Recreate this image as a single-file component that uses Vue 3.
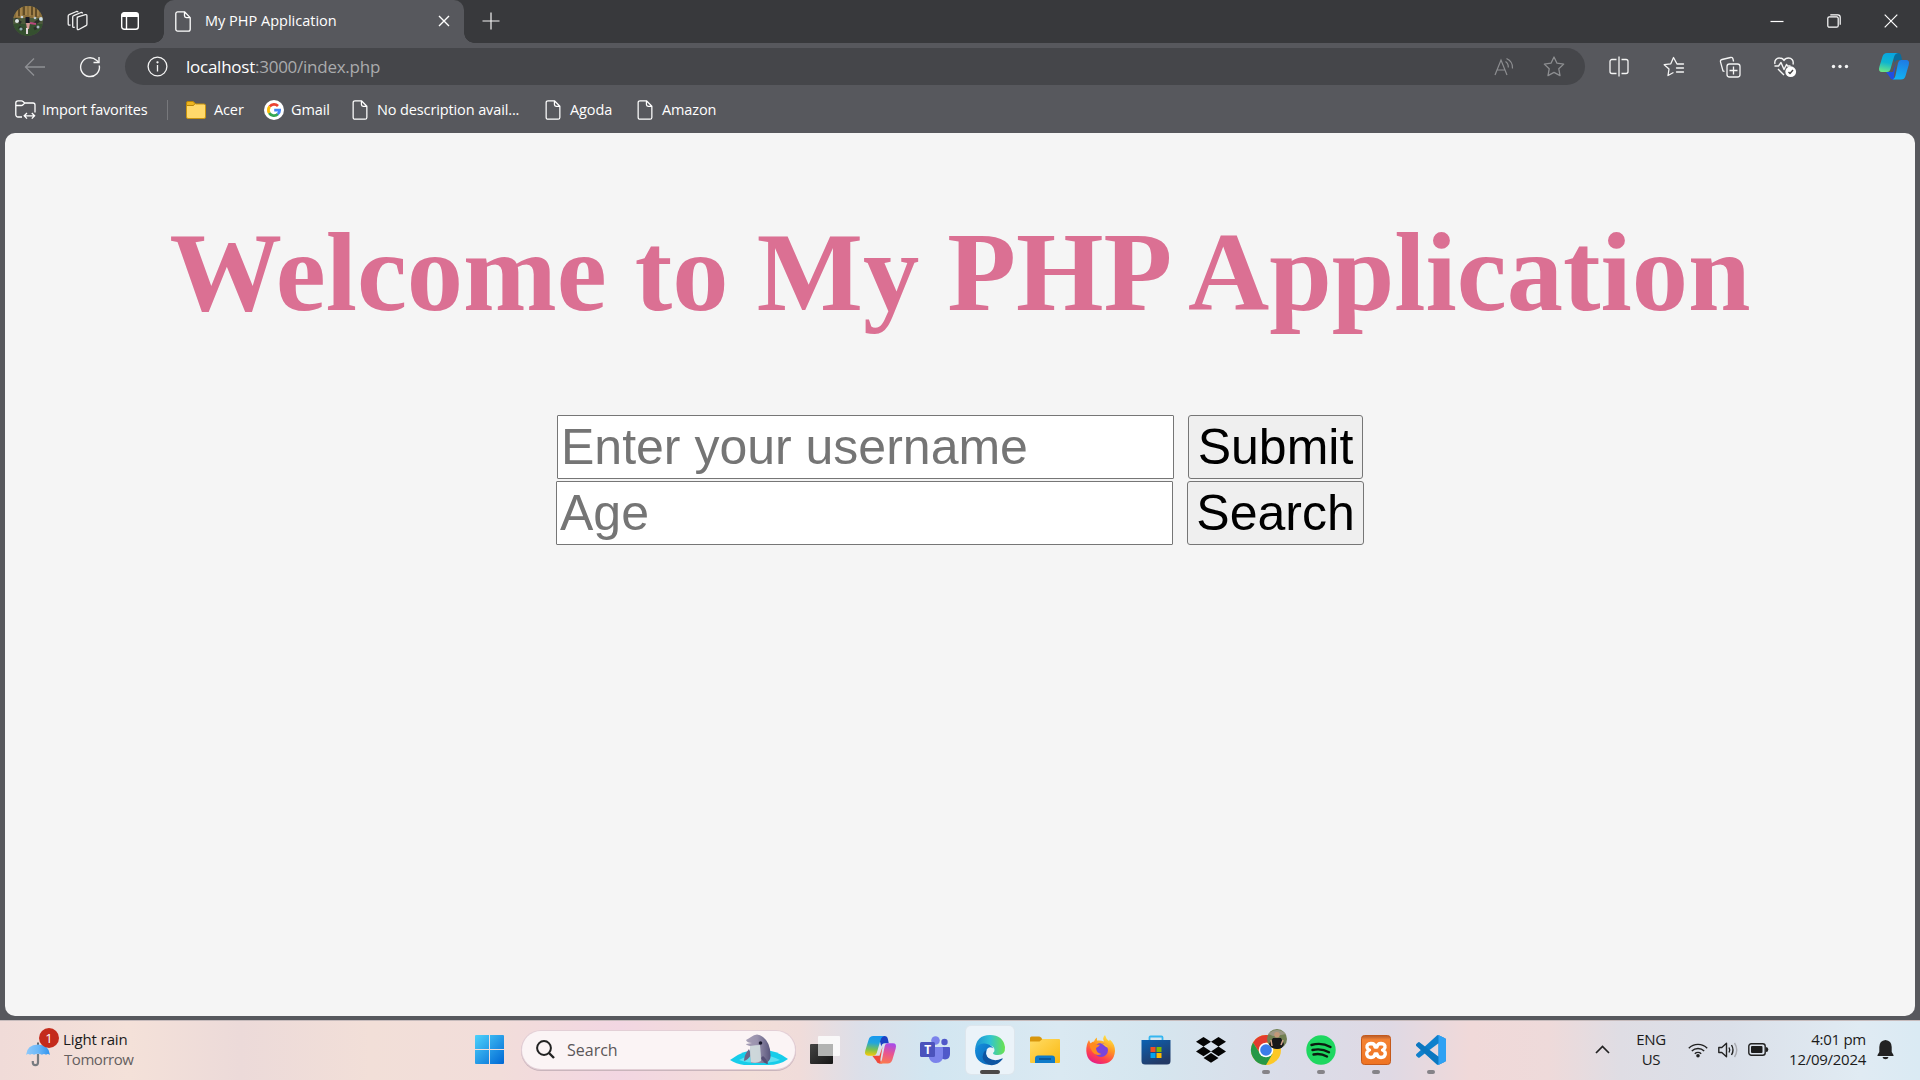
<script setup>
const bookmarks = [
  { kind: 'folder', label: 'Acer', cls: 'b-acer' },
  { kind: 'google', label: 'Gmail', cls: 'b-gmail' },
  { kind: 'page', label: 'No description avail...', cls: 'b-nodesc' },
  { kind: 'page', label: 'Agoda', cls: 'b-agoda' },
  { kind: 'page', label: 'Amazon', cls: 'b-amazon' },
]
</script>

<template>
  <div class="desktop">
    <header class="tabstrip">
      <div class="slot s-avatar">
        <svg width="30" height="30" viewBox="0 0 30 30">
          <defs><clipPath id="av"><circle cx="15" cy="15" r="15" /></clipPath></defs>
          <g clip-path="url(#av)">
            <rect width="30" height="30" fill="#4c5a3c" />
            <rect width="30" height="12" fill="#8a6f3c" />
            <path d="M4 0v11M8 0v12M13 0v9M17 0v10M21 0v12M25 0v10" stroke="#b08c50" stroke-width="1.3" />
            <path d="M6 0v10M11 0v9M19 0v9M23 0v11" stroke="#4a3a1e" stroke-width="1.3" />
            <rect y="18" width="30" height="12" fill="#35502f" />
            <path d="M2 13l6 4M28 13l-7 5M6 21l4 3M25 21l-4 2" stroke="#2a2f28" stroke-width="3" />
            <circle cx="4" cy="15" r="2" fill="#dfe6e6" /><circle cx="28" cy="13" r="2" fill="#cfe0e8" />
            <circle cx="9" cy="11" r="1.3" fill="#c9d5dc" /><circle cx="22" cy="12" r="1.3" fill="#b9c6cc" />
            <circle cx="8" cy="23" r="1.6" fill="#8fb0b2" /><circle cx="25" cy="21" r="1.5" fill="#a7b7c2" />
            <rect x="12.5" y="11" width="4" height="6" fill="#191a26" />
            <path d="M13 17h4l-1 6h-2z" fill="#d39a96" /><path d="M17 17l6 1" stroke="#b8487c" stroke-width="2" />
            <path d="M14 22v6" stroke="#e5dadd" stroke-width="2" />
          </g>
        </svg>
      </div>
      <div class="slot s-work">
        <svg width="22" height="22" viewBox="0 0 22 22" fill="none" stroke="#f1f1f1" stroke-width="1.3" stroke-linejoin="round">
          <path d="M10.2 7.2l8.2-2.5q1.5-.4 1.5 1v8.500q0 1-.9 1.400l-7.200 3.900q-1.600.7-1.600-1V8.200q0-.8.8-1z" />
          <path d="M7.700 17.200q-2 .8-2-1V7q0-1 1-1.300L14 2.500q1.400-.3 1.400 1" />
          <path d="M3.500 15q-2.300.6-2.300-1V6q0-1 1-1.300L9.500 1.500q1.400-.3 1.600.8" />
        </svg>
      </div>
      <div class="slot s-actions">
        <svg width="20" height="20" viewBox="0 0 20 20" fill="none" stroke="#fff" stroke-width="1.4">
          <rect x="1.700" y="1.700" width="16.600" height="16.600" rx="2.500" /><path d="M1.500 4.500Q1.500 1.500 4.500 1.500h11Q18.500 1.500 18.500 4.500V6h-17z" fill="#fff" stroke="none" /><path d="M6.500 6v12" />
        </svg>
      </div>
      <div class="tab">
        <svg class="fav" width="16" height="21" viewBox="0 0 16 21" fill="none" stroke="#fff" stroke-width="1.300" stroke-linejoin="round"><path d="M2.700.8H9.500l5.700 5.800V18.300a1.900 1.900 0 0 1-1.900 1.900H2.700A1.900 1.900 0 0 1 .8 18.300V2.700A1.900 1.900 0 0 1 2.700.8zM9.500.8v4a1.800 1.800 0 0 0 1.800 1.800h3.900" /></svg>
        <span class="tab-title">My PHP Application</span>
        <svg class="tab-x" width="12" height="12" viewBox="0 0 12 12" stroke="#fff" stroke-width="1.400"><path d="M1 1l10 10M11 1L1 11" /></svg>
      </div>
      <svg class="newtab" width="18" height="18" viewBox="0 0 18 18" stroke="#f4f4f4" stroke-width="1.200"><path d="M9 .5v17M.5 9h17" /></svg>
      <div class="winctl">
        <svg width="14" height="14" viewBox="0 0 14 14"><path d="M.5 7.500h13" stroke="#fff" stroke-width="1.200" /></svg>
        <svg width="14" height="14" viewBox="0 0 14 14" fill="none" stroke="#fff" stroke-width="1.200"><rect x=".8" y="2.800" width="10.400" height="10.400" rx="1.500" /><path d="M3.300.8h7.500q2.400 0 2.400 2.400v7.500" /></svg>
        <svg width="14" height="14" viewBox="0 0 14 14" stroke="#fff" stroke-width="1.200"><path d="M.7.700l12.600 12.600M13.300.700L.7 13.300" /></svg>
      </div>
    </header>

    <div class="toolbar">
      <div class="slot t-back"><svg width="22" height="20" viewBox="0 0 22 20" fill="none" stroke="#8f9094" stroke-width="1.300"><path d="M21 10H2M10 1.500L1.500 10l8.500 8.500" /></svg></div>
      <div class="slot t-reload"><svg width="22" height="22" viewBox="0 0 22 22" fill="none" stroke="#f4f4f4" stroke-width="1.400"><path d="M20.300 9.500A9.400 9.400 0 1 1 17.500 4.300L19.500 6" /><path d="M20 1v5.500h-5.500" /></svg></div>
      <div class="address">
        <svg class="info" width="21" height="21" viewBox="0 0 21 21" fill="none" stroke="#f4f4f4" stroke-width="1.300"><circle cx="10.500" cy="10.500" r="9.400" /><path d="M10.500 9v6.500" /><circle cx="10.500" cy="6.300" r=".5" fill="#fff" /></svg>
        <span class="host">localhost</span><span class="path">:3000/index.php</span>
        <svg class="read" width="20" height="20" viewBox="0 0 20 20" fill="none" stroke="#8d8e91" stroke-width="1.200"><path d="M1 18L7 3l6 15M3 13h8M11.500 4.500q3 2 2.800 6M12.500 1.500q6.500 3 6 10" /></svg>
        <svg class="star" width="22" height="21" viewBox="0 0 22 21" fill="none" stroke="#8d8e91" stroke-width="1.300" stroke-linejoin="round"><path d="M11 1l3 6.200 6.700.9-4.900 4.700 1.200 6.800-6-3.200-6 3.200 1.200-6.800L1.300 8.100 8 7.200z" /></svg>
      </div>
      <div class="tools">
        <svg width="22" height="22" viewBox="0 0 22 22" fill="none" stroke="#f4f4f4" stroke-width="1.300"><path d="M8.500 3.500H4A2 2 0 0 0 2 5.500v10a2 2 0 0 0 2 2h4.500M13.500 3.500H18a2 2 0 0 1 2 2v10a2 2 0 0 1-2 2h-4.500M11 .5v20" /></svg>
        <svg width="22" height="22" viewBox="0 0 22 22" fill="none" stroke="#f4f4f4" stroke-width="1.300" stroke-linejoin="round" stroke-linecap="round"><path d="M20.500 8H14L10.500 1.500 7.800 7.800l-6.600.9L6 13l-1 6.500 5-2.700M13.500 12h7M13.500 16h7" /></svg>
        <svg width="22" height="22" viewBox="0 0 22 22" fill="none" stroke="#f4f4f4" stroke-width="1.300"><rect x="8" y="8" width="13" height="13" rx="2.500" /><path d="M14.500 10.500v8M10.500 14.500h8M5.500 15.500L4 14.900l-2.500-9Q1 4 3 3.500l8.500-2Q13.500 1 14 3l.6 2.500" /></svg>
        <svg class="heart" width="24" height="22" viewBox="0 0 24 22" fill="none" stroke="#f4f4f4" stroke-width="1.400" stroke-linejoin="round"><path d="M2 8C1 4 4 1.800 6.500 2 9 2 10.500 3.200 11 4.500 12 2.500 14 2 15.500 2 18.500 2 21 4.500 20 8.500M1.500 10h4l2.500-3.500 3 7 2.500-5L14.500 10h3M5 13l6 6" /><circle cx="17.700" cy="15.700" r="5.400" fill="#fff" stroke="none" /><path d="M15.500 16l1.500 1.500 3-3.500" stroke="#444" /></svg>
        <svg width="22" height="22" viewBox="0 0 22 22" fill="#f4f4f4"><circle cx="4.500" cy="10.500" r="1.700" /><circle cx="11" cy="10.500" r="1.700" /><circle cx="17.500" cy="10.500" r="1.700" /></svg>
      </div>
      <svg class="copilot" width="30" height="27" viewBox="0 0 30 27">
        <defs>
          <linearGradient id="ca" x1=".5" y1="0" x2=".3" y2="1"><stop offset="0" stop-color="#08a5e0" /><stop offset=".5" stop-color="#0fb5cf" /><stop offset="1" stop-color="#6be686" /></linearGradient>
          <linearGradient id="cb" x1=".6" y1="0" x2=".4" y2="1"><stop offset="0" stop-color="#1f7be4" /><stop offset="1" stop-color="#11b4f2" /></linearGradient>
        </defs>
        <path d="M13 0h6q2.500 0 3.200 3L23 7h-4q-2.500 0-3.200 3z" fill="#0a6c9c" />
        <path d="M7 19h7l3-9L15 22q-.6 3 2 4.500h-3q-2.500 0-3.200-2.500z" fill="#1f4fe2" />
        <path d="M8 0h11q-3 .5-4 4l-3.500 12q-.8 3-3.500 3H3q-4 0-2.700-5L3.500 3.500Q4.500 0 8 0z" fill="url(#ca)" />
        <path d="M22 7h5q4 0 2.700 5l-3.200 11q-1 3.500-4.500 3.500H13q2.500-.3 3.500-4L19 10q.8-3 3-3z" fill="url(#cb)" />
      </svg>
    </div>

    <nav class="bookmarks">
      <svg class="imp" width="21" height="20" viewBox="0 0 21 20" fill="none" stroke="#fff" stroke-width="1.300"><path d="M7 17H3a2.200 2.200 0 0 1-2.200-2.200V3A2.200 2.200 0 0 1 3 .8h3.500q1 0 1.600.8L9.700 3H18a2 2 0 0 1 2 2v7.500M.8 5.500h5.500q1 0 1.700-.8L9.700 3M9.500 15.800h9.800M12 13l-2.800 2.800L12 18.600M16.800 13l2.800 2.800-2.800 2.800" /></svg>
      <span class="b-import">Import favorites</span>
      <i class="divider"></i>
      <div v-for="b in bookmarks" :key="b.label" class="bm" :class="b.cls">
        <svg v-if="b.kind === 'folder'" width="20" height="18" viewBox="0 0 20 18"><path d="M.5 2Q.5.500 2 .5h5L9.500 3H18q1.500 0 1.500 1.500V16q0 1.500-1.500 1.500H2Q.5 17.500.5 16z" fill="#ffd96b" stroke="#c9940f" /><path d="M.5 2Q.5.500 2 .5h5L9 2.500 7.500 4.500H.5z" fill="#eeb51f" stroke="#b98608" /></svg>
        <svg v-else-if="b.kind === 'google'" width="20" height="20" viewBox="0 0 20 20"><circle cx="10" cy="10" r="10" fill="#fff" /><g fill="none" stroke-width="2.800"><path d="M5.700 6.500A5.600 5.600 0 0 1 14 6" stroke="#ea4335" /><path d="M5.300 13A5.600 5.600 0 0 1 5.700 6.500" stroke="#fbbc05" /><path d="M13.900 14A5.600 5.600 0 0 1 5.200 12.900" stroke="#34a853" /><path d="M10.200 10.200h5.400Q15.600 12.700 13.700 14.200" stroke="#4285f4" /></g></svg>
        <svg v-else width="16" height="20" viewBox="0 0 16 21" fill="none" stroke="#fff" stroke-width="1.300" stroke-linejoin="round"><path d="M2.700.8H9.500l5.700 5.800V18.300a1.900 1.900 0 0 1-1.900 1.900H2.700A1.900 1.900 0 0 1 .8 18.300V2.700A1.900 1.900 0 0 1 2.700.8zM9.500.8v4a1.800 1.800 0 0 0 1.800 1.800h3.900" /></svg>
        <span>{{ b.label }}</span>
      </div>
    </nav>

    <main class="page">
      <h1>Welcome to My PHP Application</h1>
      <div class="row r1"><input placeholder="Enter your username" /><button>Submit</button></div>
      <div class="row r2"><input placeholder="Age" /><button>Search</button></div>
    </main>

    <footer class="taskbar">
      <div class="weather">
        <svg width="52" height="40" viewBox="0 0 52 40">
          <defs><linearGradient id="um" x1="0" x2="1"><stop offset="0" stop-color="#8ec9fa" /><stop offset=".5" stop-color="#6db8f8" /><stop offset="1" stop-color="#2f93ee" /></linearGradient></defs>
          <path d="M18 24v8.500a2.600 2.600 0 0 1-5.200 0v-1.500" fill="none" stroke="#777b80" stroke-width="2.200" />
          <path d="M18 12.500v3" stroke="#666" stroke-width="2" />
          <path d="M6 25Q7 14.500 18 14.500T30 25q-2-2-4-.3-2-1.500-4 0-4-2-8 0-2-1.500-4 0-2-1.700-4 .3z" fill="url(#um)" />
        </svg>
        <span class="badge">1</span>
        <div class="wtext"><span class="w1">Light rain</span><span class="w2">Tomorrow</span></div>
      </div>
      <svg class="start" width="29" height="29" viewBox="0 0 29 29">
        <defs><linearGradient id="wg" gradientUnits="userSpaceOnUse" x1="0" y1="0" x2="29" y2="29"><stop offset="0" stop-color="#4dd2fb" /><stop offset="1" stop-color="#0067d4" /></linearGradient></defs>
        <path d="M1 0h13v14H0V1Q0 0 1 0zM15 0h13q1 0 1 1v13H15zM0 15h14v14H1q-1 0-1-1zM15 15h14v13q0 1-1 1H15z" fill="url(#wg)" />
      </svg>
      <div class="search">
        <svg width="19" height="19" viewBox="0 0 19 19" fill="none" stroke="#222" stroke-width="2"><circle cx="8" cy="8" r="6.900" /><path d="M13 13l5 5" stroke-width="2.400" /></svg>
        <span>Search</span>
        <svg class="dolphin" width="58" height="32" viewBox="0 0 58 32">
          <defs><linearGradient id="dg" x1="0" x2="1"><stop offset="0" stop-color="#a79fb5" /><stop offset=".45" stop-color="#9a93ae" /><stop offset="1" stop-color="#59567c" /></linearGradient></defs>
          <path d="M0 26Q14 15 30 15.500T58 25Q50 31 38 31H14Q6 30 0 26z" fill="#17cdea" />
          <path d="M9 26Q18 21 29 21t21 5Q42 29 29 29T9 26z" fill="#5fe0f1" />
          <path d="M19 15q-5 6-5 12 4-1 7-6zM37 18q1 8 0 12-4-2-5-7z" fill="#6d6588" />
          <path d="M16 6q2-1 5-3 6-5 12 0 8 6 7.500 20Q40 27 36 29H21q-1-7-1-17-4-1-4-2l6-1q-5 0-6-3z" fill="url(#dg)" />
          <path d="M20 12q6-1 10-1 1 9 1 16-5 3-10 1-1-7-1-16z" fill="#d3dedf" opacity=".9" />
          <path d="M33 22q4 3 5 8-5-1-7-6z" fill="#554f75" />
          <circle cx="30.500" cy="9" r="1.800" fill="#18182c" />
        </svg>
      </div>
      <div class="apps">
        <div class="app"><svg width="30" height="28" viewBox="0 0 30 28"><defs><linearGradient id="tv" x1="0" y1="0" x2="1" y2="1"><stop offset="0" stop-color="#444" /><stop offset="1" stop-color="#161616" /></linearGradient></defs><rect y="8" width="23" height="20" rx="1" fill="url(#tv)" /><rect x="8" width="22" height="20" rx="1" fill="#fbfbfb" opacity=".9" /><path d="M8 8h15v12H8z" fill="#b2b3b2" /></svg></div>
        <div class="app"><svg width="31" height="28" viewBox="0 0 30 27">
          <defs>
            <linearGradient id="cc" x1=".5" y1="0" x2=".4" y2="1"><stop offset="0" stop-color="#1898ef" /><stop offset=".35" stop-color="#22a5dc" /><stop offset=".7" stop-color="#7cc24d" /><stop offset="1" stop-color="#f2c90b" /></linearGradient>
            <linearGradient id="cd" x1=".6" y1="0" x2=".4" y2="1"><stop offset="0" stop-color="#a84be8" /><stop offset=".5" stop-color="#e9558f" /><stop offset="1" stop-color="#fb7a4f" /></linearGradient>
          </defs>
          <path d="M13 0h6q2.500 0 3.200 3L23 7h-4q-2.500 0-3.200 3z" fill="#1b41c4" />
          <path d="M7 19h7l3-9L15 22q-.6 3 2 4.500h-3q-2.500 0-3.200-2.500z" fill="#ef4a3c" />
          <path d="M8 0h11q-3 .5-4 4l-3.500 12q-.8 3-3.500 3H3q-4 0-2.700-5L3.500 3.500Q4.500 0 8 0z" fill="url(#cc)" />
          <path d="M22 7h5q4 0 2.700 5l-3.200 11q-1 3.500-4.500 3.500H13q2.500-.3 3.500-4L19 10q.8-3 3-3z" fill="url(#cd)" />
        </svg></div>
        <div class="app"><div class="teams"><svg width="30" height="27" viewBox="0 0 30 27"><circle cx="24.500" cy="6" r="3.200" fill="#5059c9" /><path d="M21 11h8q1 0 1 1v6q0 5-5 5.500l-4-1z" fill="#5059c9" /><circle cx="15.500" cy="4.500" r="4.300" fill="#7b83eb" /><path d="M9 11h13q1 0 1 1v7.500q0 7.500-7 7.500-5 0-7-5z" fill="#7b83eb" /><rect y="6" width="15" height="15" rx="1.500" fill="#4b53bc" /></svg><b>T</b></div></div>
        <div class="app active">
          <svg width="30" height="30" viewBox="0 0 30 30">
            <defs>
              <linearGradient id="e1" x1="0" x2="1"><stop offset="0" stop-color="#1b8fd4" /><stop offset=".5" stop-color="#2fc3d5" /><stop offset="1" stop-color="#6be34c" /></linearGradient>
              <linearGradient id="e2" x1="0" y1="0" x2="1" y2="1"><stop offset="0" stop-color="#1590de" /><stop offset="1" stop-color="#0a63b4" /></linearGradient>
            </defs>
            <path d="M0 15Q1 0 15 0 28 0 30 12q.5 8-7 8-5 0-5-2 1.500-1 1.500-3 0-4-6-5Q5 8 0 15z" fill="url(#e1)" />
            <path d="M0 15Q3 8 9.500 8.500q6 .5 9 5-5-3-7 1.500-2 8 6 12-1 3-4 2.800Q0 28 0 15z" fill="url(#e2)" />
            <path d="M11.500 15q-2 4.500 2 8 6 4 13.500.5 1-.5.500.7Q22 31 15 30 5 26 8.500 18q1-2.500 3-3z" fill="#0d55a2" />
          </svg>
          <i class="ind wide"></i>
        </div>
        <div class="app"><svg width="30" height="27" viewBox="0 0 30 27"><defs><linearGradient id="fg" x1="0" y1="0" x2="1" y2="1"><stop offset="0" stop-color="#ffdc65" /><stop offset="1" stop-color="#fbb911" /></linearGradient></defs><path d="M0 2Q0 .5 1.500.5H9q1 0 2 1L13 4v5H0z" fill="#d8960c" /><path d="M0 5.500h9.500L12.500 3H29q1 0 1 1v22q0 1-1 1H1q-1 0-1-1z" fill="url(#fg)" /><path d="M5 27v-4.500Q5 19.500 8 19.500h14q3 0 3 3V27z" fill="#0f7bc9" /><path d="M9 23h12" stroke="#0a4f8d" stroke-width="1.500" /></svg></div>
        <div class="app"><svg width="29" height="29" viewBox="0 0 29 29"><defs><linearGradient id="ff" x1=".8" y1="0" x2=".3" y2="1"><stop offset="0" stop-color="#fff04a" /><stop offset=".4" stop-color="#ff9a22" /><stop offset=".75" stop-color="#ff3f4e" /><stop offset="1" stop-color="#e41c8a" /></linearGradient></defs><path d="M3 5l1.500 3.500Q6 6.500 8 6.500q1-3 3-4v3q4-.5 7 1-2-3.500 1-6.500 1 4 4 6l.8-1.500Q29 9 29 16 28 29 14.500 29 1 28.500.3 16 0 10 3 5z" fill="url(#ff)" /><circle cx="15" cy="15" r="7" fill="#7a44dc" /><path d="M3.500 9q4-2 7 .5 2 .5 3.500.3-1 2-4 3.200 0 5 5.500 6-6 2.500-9-2T3.500 9z" fill="#ff8a1e" /><path d="M14 8q7 0 9 6-1-2-3-2-3-3-6-4z" fill="#ffbd32" /></svg></div>
        <div class="app"><svg width="30" height="30" viewBox="0 0 30 30"><defs><linearGradient id="st" x1="0" y1="0" x2=".5" y2="1"><stop offset="0" stop-color="#0c62b3" /><stop offset="1" stop-color="#233a66" /></linearGradient></defs><path d="M8.500 6V2.500q0-1 1-1h11q1 0 1 1V6" fill="none" stroke="#35b6f0" stroke-width="1.800" /><path d="M.5 5h29v21q0 3.500-3.500 3.500H4Q.5 29.500.5 26z" fill="url(#st)" /><path d="M9.500 12h5v5h-5z" fill="#f25022" /><path d="M15.500 12h5v5h-5z" fill="#7fba00" /><path d="M9.500 18h5v5h-5z" fill="#00a4ef" /><path d="M15.500 18h5v5h-5z" fill="#ffb900" /></svg></div>
        <div class="app"><svg width="30" height="26" viewBox="0 0 30 26"><path d="M7.500 0L15 4.800 7.500 9.600 0 4.800zM22.500 0L30 4.800l-7.500 4.800L15 4.800zM7.500 9.600l7.500 4.800-7.500 4.800L0 14.400zM22.500 9.600l7.500 4.800-7.500 4.800L15 14.400zM15 16l7.500 4.900L15 25.700l-7.500-4.800z" fill="#050505" /></svg></div>
        <div class="app">
          <svg class="chrome" width="36" height="36" viewBox="0 0 36 36"><circle cx="15" cy="21" r="15" fill="#fcc827" /><path d="M2 13.500A15 15 0 0 1 28 13.500H15L9 24.500z" fill="#e33b2e" /><path d="M2 13.500A15 15 0 0 0 15 36l6.500-11.200L9 24.500z" fill="#269847" /><circle cx="15" cy="21" r="7.300" fill="#fff" /><circle cx="15" cy="21" r="5.800" fill="#3c7de8" /><circle cx="26" cy="10" r="10" fill="#718052" /><path d="M17 5q9-8 18 0l-5 1-8 1z" fill="#9b9884" /><path d="M22 9h8l3 6q-1 5-7 5t-8-5z" fill="#17181a" /><circle cx="26" cy="5.800" r="2.800" fill="#c29878" /><path d="M20 11l1 6M32 11l-2 5" stroke="#d5a58d" stroke-width="1.500" /></svg>
          <i class="ind"></i>
        </div>
        <div class="app"><svg width="30" height="30" viewBox="0 0 30 30"><circle cx="15" cy="15" r="14.700" fill="#1ed760" /><path d="M5.500 10q10-3 19 2M6.500 15q9-2 16.500 2.200M7.500 19.500q7-1.600 13.500 2" fill="none" stroke="#0b1b10" stroke-width="2.400" stroke-linecap="round" /></svg><i class="ind"></i></div>
        <div class="app"><svg width="30" height="30" viewBox="0 0 30 30"><defs><linearGradient id="xg" x1="0" y1="0" x2="0" y2="1"><stop offset="0" stop-color="#b55b2a" /><stop offset=".15" stop-color="#f48334" /><stop offset="1" stop-color="#ef7322" /></linearGradient></defs><rect x=".5" y=".5" width="29" height="29" rx="3" fill="url(#xg)" stroke="#c4591b" /><path d="M10 8.500q4 0 4 3.500h2q0-3.500 4-3.500 4.500.5 4 4-.5 2-2.500 2.500 3 1 2.800 4-.5 3.500-4.300 3.500-3.500 0-4-3.500h-2q-.5 3.500-4 3.500-3.800 0-4.300-3.500 0-3 2.800-4-2-.5-2.500-2.500-.5-3.500 4-4z" fill="none" stroke="#fff" stroke-width="3.300" stroke-linejoin="round" /></svg><i class="ind"></i></div>
        <div class="app"><svg width="30" height="30" viewBox="0 0 100 100"><path fill-rule="evenodd" d="M96.500 10.800L75.900.9C73.500-.3 70.600.2 68.800 2.100L29.400 38 12.200 25C10.600 23.800 8.400 23.900 6.900 25.200L1.400 30.200C-.5 31.800-.5 34.700 1.400 36.400L16.200 50 1.400 63.600C-.5 65.300-.5 68.200 1.400 69.800L6.900 74.800C8.400 76.100 10.600 76.200 12.200 75L29.400 62 68.800 97.900C70.600 99.700 73.500 100.200 75.900 99.100L96.500 89.200C98.600 88.200 100 86 100 83.600V16.400C100 14 98.600 11.800 96.500 10.800zM75 72.700L45.100 50 75 27.300z" fill="#0f80cc" /><path d="M12.200 25L75 72.700V97L68.800 97.900 1.400 36.400C-.5 34.700-.5 31.800 1.400 30.200L6.900 25.200C8.400 23.900 10.600 23.800 12.200 25z" fill="#0a6fb6" opacity=".55" /><path d="M75.900 99.100C73.500 100.200 70.600 99.700 68.800 97.900 71 100 75 98.500 75 95.300V4.700C75 1.500 71 0 68.800 2.100 70.600.2 73.500-.3 75.900.9L96.500 10.800C98.600 11.800 100 14 100 16.400V83.600C100 86 98.600 88.200 96.500 89.200z" fill="#2fa1f3" /></svg><i class="ind"></i></div>
      </div>
      <div class="tray">
        <svg class="chev" width="15" height="9" viewBox="0 0 15 9" fill="none" stroke="#222" stroke-width="1.700"><path d="M1 8l6.500-6.500L14 8" /></svg>
        <div class="lang"><span>ENG</span><span>US</span></div>
        <svg class="wifi" width="20" height="16" viewBox="0 0 20 16" fill="none" stroke="#222" stroke-width="1.400"><path d="M.8 6.200a13 13 0 0 1 18.400 0M3.800 9a8.800 8.800 0 0 1 12.400 0M6.800 11.700a4.600 4.600 0 0 1 6.400 0" /><circle cx="10" cy="13.700" r="1.800" fill="#222" stroke="none" /></svg>
        <svg class="vol" width="20" height="16" viewBox="0 0 20 16" fill="none" stroke="#222" stroke-width="1.400" stroke-linejoin="round"><path d="M.8 5.500h3L8.500 1.300v13.400L3.800 10.500h-3zM11 5.500q1.500 2.500 0 5M13.500 3q3 5 0 10" /><path d="M16.500 1q4.500 7 0 14" stroke="#aaabb1" /></svg>
        <svg class="bat" width="21" height="13" viewBox="0 0 21 13"><rect x=".8" y=".8" width="16.400" height="11.400" rx="2.500" fill="none" stroke="#222" stroke-width="1.400" /><rect x="3" y="3" width="11.500" height="7" rx="1" fill="#1c1c1c" /><path d="M18 4q2.300 0 2.300 2.500T18 9z" fill="#222" /></svg>
        <div class="clock"><span class="c1">4:01 pm</span><span class="c2">12/09/2024</span></div>
        <svg class="bell" width="17" height="20" viewBox="0 0 17 20"><path d="M8.500 0Q14.500.5 14.700 7v5L16.500 15v1H.5v-1L2.300 12V7Q2.500.5 8.500 0zM5.500 17h6q-.5 2.300-3 2.300t-3-2.300z" fill="#222" /></svg>
      </div>
    </footer>
  </div>
</template>

<style>
body { margin: 0; overflow: hidden; }
</style>

<style scoped>
* { box-sizing: border-box; }
svg { display: block; flex: none; overflow: visible; }
span { white-space: nowrap; }
.desktop { width: 1920px; height: 1080px; background: #57585d; display: flex; flex-direction: column; font-family: "Open Sans", "Noto Sans", sans-serif; color: #fff; overflow: hidden; }
.slot { display: flex; align-items: center; justify-content: center; flex: none; }

.tabstrip { height: 43px; flex: none; background: #38393c; display: flex; align-items: center; padding-bottom: 1px; }
.s-avatar { width: 30px; margin-left: 13px; }
.s-work { width: 22px; margin-left: 24px; }
.s-actions { width: 20px; margin-left: 31px; margin-right: 24px; }
.tab { width: 300px; height: 43px; align-self: flex-start; flex: none; background: #57585d; border-radius: 10px 10px 0 0; display: flex; align-items: center; padding: 0 0 1px 11px; position: relative; }
.tab::before, .tab::after { content: ""; position: absolute; bottom: 0; width: 10px; height: 10px; }
.tab::before { left: -10px; background: radial-gradient(circle at 0 0, transparent 9.500px, #57585d 10px); }
.tab::after { right: -10px; background: radial-gradient(circle at 100% 0, transparent 9.500px, #57585d 10px); }
.tab-title { font-size: 14.500px; margin-left: 14px; width: 232px; line-height: 20px; padding-bottom: 1px; box-sizing: content-box; }
.tab-x { margin-left: 1px; }
.newtab { margin-left: 18px; }
.winctl { margin-left: auto; display: flex; gap: 43px; margin-right: 22px; }

.toolbar { height: 47px; flex: none; display: flex; align-items: center; }
.t-back { width: 22px; margin-left: 24px; }
.t-reload { width: 22px; margin-left: 33px; }
.address { width: 1460px; height: 37px; margin-left: 24px; background: #45464a; border-radius: 19px; display: flex; align-items: center; padding: 0 20px 0 22px; font-size: 17px; }
.host { margin-left: 18px; letter-spacing: -.25px; }
.path { color: #aaabad; letter-spacing: -.25px; }
.read { margin-left: auto; }
.star { margin-left: 29px; }
.tools { display: flex; gap: 33.300px; margin-left: 23px; }
.heart { margin: 0 -1px; }
.copilot { margin-left: 28px; }

.bookmarks { height: 43px; flex: none; display: flex; align-items: center; padding: 0 0 4px 15px; font-size: 14.500px; }
.b-import { margin-left: 6px; width: 125px; letter-spacing: -.2px; }
.divider { width: 1px; height: 20px; background: #77787c; margin-right: 18px; }
.bm { display: flex; align-items: center; gap: 8px; letter-spacing: -.12px; }
.b-acer { width: 78px; }
.b-gmail { width: 88px; gap: 7px; }
.b-nodesc { width: 193px; gap: 9px; }
.b-agoda { width: 92px; gap: 9px; }
.b-amazon { gap: 9px; }

.page { height: 883px; flex: none; margin: 0 5px; background: #f5f5f5; border-radius: 10px; display: flex; flex-direction: column; align-items: center; }
h1 { font: 700 112.500px/128px "Liberation Serif", "Times New Roman", serif; color: #db7093; margin: 75px 0 79px; white-space: nowrap; }
.row { display: flex; gap: 14px; height: 64px; }
.r2 { margin-top: 2px; }
.row input { width: 617px; height: 64px; border: 1px solid #767676; border-radius: 1px; padding: 0 3px; background: #fff; font: 50px "Liberation Sans", Arial, sans-serif; outline: none; }
.row input::placeholder { color: #757575; opacity: 1; }
.row button { height: 64px; border: 1px solid #767676; border-radius: 3px; padding: 0; background: #efefef; color: #000; font: 50px "Liberation Sans", Arial, sans-serif; width: 175px; }
.r2 button { width: 177px; }

.taskbar { height: 60px; margin-top: 4px; padding-bottom: 2px; flex: none; display: flex; align-items: center; color: #1b1b1b; border-top: 1px solid #c6bbbc; background: linear-gradient(90deg, #f0dbd8 0, #f4e1d9 130px, #ecdad9 240px, #f2dfd8 370px, #f2ddda 500px, #f2d6e2 620px, #f2ded8 750px, #f0dcda 800px, #dcdfe9 860px, #d2e6f1 930px, #dae9f2 1060px, #d5e6ef 1150px, #dadde9 1280px, #dfd9e4 1390px, #f0d9d9 1470px, #eedada 1550px, #dfdde4 1620px, #dbe0e9 1730px, #e0ebf3 1860px, #daeaf3 1920px); }
.weather { width: 400px; margin-left: 20px; height: 50px; position: relative; display: flex; align-items: center; }
.weather > svg { margin-right: -9px; }
.badge { position: absolute; left: 19px; top: 3px; width: 20px; height: 20px; border-radius: 50%; background: #c42b1c; color: #fff; font-size: 13px; line-height: 20px; text-align: center; }
.wtext { display: flex; flex-direction: column; font-size: 15px; line-height: 20px; padding-bottom: 2px; }
.w1 { letter-spacing: -.1px; }
.w2 { color: #65605f; margin-left: 1px; letter-spacing: -.45px; }
.start { margin-left: 55px; }
.search { width: 273px; height: 38px; margin-left: 18px; border-radius: 19px; background: #fbf4f5; box-shadow: 0 0 0 1px #e3cfd6, 0 1px 0 1px #c9b5bc; display: flex; align-items: center; padding-left: 14px; color: #5b5759; font-size: 16px; }
.search span { margin-left: 12px; width: 163px; }
.apps { display: flex; margin-left: 6px; gap: 7.100px; }
.app { width: 48px; height: 48px; display: flex; align-items: center; justify-content: center; position: relative; border-radius: 5px; }
.app.active { background: #ebf3f9; box-shadow: 0 0 0 1px #dde6ed; }
.chrome { margin: 0 0 6px 6px; }
.ind { position: absolute; bottom: 0; left: 20px; width: 8px; height: 4px; border-radius: 2px; background: #858388; }
.ind.wide { left: 14px; width: 20px; background: #4b4848; }
.teams { position: relative; }
.teams b { position: absolute; left: 0; top: 6px; width: 15px; line-height: 15px; text-align: center; font-size: 12px; color: #fff; }
.tray { display: flex; align-items: center; margin-left: auto; padding-right: 26px; font-size: 15px; line-height: 20px; }
.lang { width: 40px; margin-left: 21px; display: flex; flex-direction: column; align-items: center; letter-spacing: -.4px; padding-bottom: 2px; }
.wifi { margin-left: 17px; }
.vol { margin-left: 10px; }
.bat { margin-left: 10px; }
.clock { width: 97px; display: flex; flex-direction: column; align-items: flex-end; letter-spacing: -.27px; padding-bottom: 2px; }
.bell { margin-left: 11px; }
</style>
